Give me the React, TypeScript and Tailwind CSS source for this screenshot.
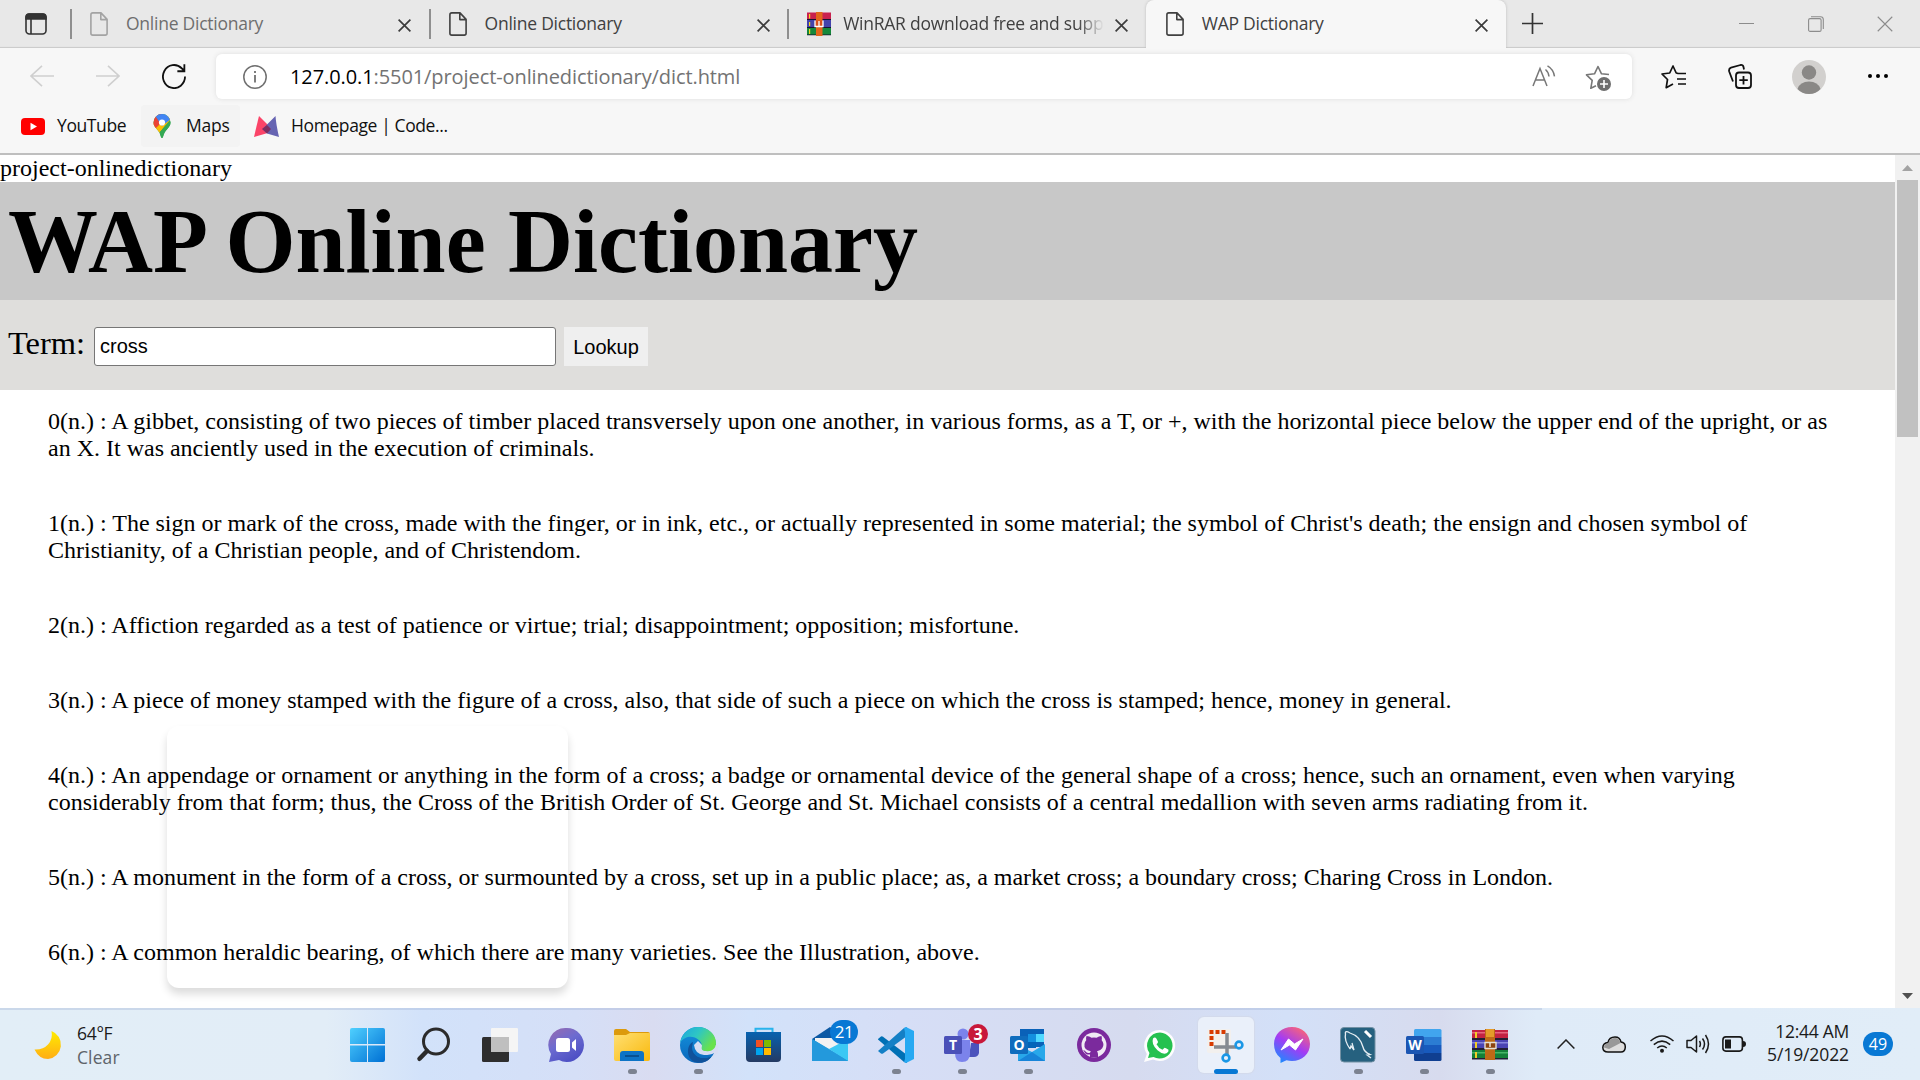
import React from "react";

const UI = "font-['Open_Sans','Noto_Sans',sans-serif]";

function DocIcon({ color }: { color: string }) {
  return (
    <svg width="18" height="24" viewBox="0 0 18 24" fill="none" stroke={color} strokeWidth="1.6" strokeLinejoin="round" className="shrink-0">
      <path d="M2.8 .9H11L17.1 7.4V21.2Q17.1 23.1 15.2 23.1H2.8Q.9 23.1 .9 21.2V2.8Q.9 .9 2.8 .9ZM10.8 1V7.6H17" />
    </svg>
  );
}

function CloseIcon({ size = 13, color = "#3c3c3c", w = 1.7 }: { size?: number; color?: string; w?: number }) {
  return (
    <svg width={size} height={size} viewBox="0 0 13 13" stroke={color} strokeWidth={w} className="shrink-0">
      <path d="M.6 .6 12.4 12.4M12.4 .6 .6 12.4" />
    </svg>
  );
}

function RarFavicon() {
  return (
    <svg width="24" height="24" viewBox="0 0 24 24" className="shrink-0">
      <path d="M0 .5h24v7.500H0z" fill="#c9214e" />
      <path d="M0 8h24v8H0z" fill="#4443ac" />
      <path d="M0 16h24v7H0z" fill="#16883b" />
      <path d="M0 7h24v1H0zM0 15h24v1H0zM0 22.4h24v.8H0z" fill="#151530" />
      <path d="M9 0h6.500v24H9z" fill="#e2661b" />
      <path d="M2 2h1.200v4.500H2zM2 10h1.200v4H2zM2 17h1.200v5H2z" fill="#f4d722" />
      <path d="M8 8.500v6h8v-6" fill="#d84f1f" stroke="#fff" strokeWidth="1.300" />
      <path d="M12 9v5" stroke="#fff" strokeWidth="1.300" />
    </svg>
  );
}

function Tab({ title, icon, muted, clip }: { title: string; icon: React.ReactNode; muted?: boolean; clip?: boolean }) {
  return (
    <div className="flex h-12 w-[358.6px] shrink-0 items-center">
      <div className="h-[30px] w-0.5 shrink-0 bg-[#8f8f8f]" />
      <div className="ml-[18px] flex w-6 shrink-0 items-center">{icon}</div>
      <div
        className={`ml-3 -mt-px w-[261px] shrink-0 whitespace-nowrap text-[17.5px] tracking-[-0.25px] ${muted ? "text-[#6e6e6e]" : "text-[#404040]"} ${clip ? "[mask-image:linear-gradient(to_right,black_90%,transparent_100%)]" : ""}`}
      >
        {title}
      </div>
      <div className="ml-[11px] mt-0.5">
        <CloseIcon />
      </div>
    </div>
  );
}

function TabStrip() {
  return (
    <div className="flex h-12 items-center bg-[#e8e8e8] shadow-[inset_0_-2px_1px_-1px_#c9c9c9]">
      <svg className="ml-[25px] shrink-0" width="22" height="22" viewBox="0 0 22 22" fill="none" stroke="#333" strokeWidth="1.600">
        <rect x="1" y="1" width="20" height="20" rx="3.500" />
        <path d="M1 6V4a3 3 0 013-3h14a3 3 0 013 3v2z" fill="#333" />
        <path d="M6 6v15" />
      </svg>
      <div className="ml-[23px] flex">
        <Tab title="Online Dictionary" icon={<DocIcon color="#a3a3a3" />} muted />
        <Tab title="Online Dictionary" icon={<DocIcon color="#404040" />} />
        <Tab title="WinRAR download free and supp" icon={<RarFavicon />} clip />
      </div>
      <div className="flex h-12 w-[360px] shrink-0 items-center rounded-t-lg bg-[#f7f7f7] pl-5 shadow-[0_0_3px_#bbb] [clip-path:inset(-3px_-3px_0_-3px)]">
        <DocIcon color="#404040" />
        <div className="ml-[18px] -mt-px w-[261px] text-[17.500px] tracking-[-0.250px] text-[#404040]">WAP Dictionary</div>
        <div className="ml-[12px] mt-0.5">
          <CloseIcon />
        </div>
      </div>
      <svg className="-mt-0.5 ml-4 shrink-0" width="21" height="21" viewBox="0 0 21 21" stroke="#333" strokeWidth="1.700">
        <path d="M10.500 0v21M0 10.500h21" />
      </svg>
      <div className="-mt-px ml-auto mr-[27px] flex items-center gap-[53px]">
        <div className="mr-px h-px w-[15px] bg-[#8c8c8c]" />
        <svg width="16" height="16" viewBox="0 0 16 16" fill="none" stroke="#8c8c8c" strokeWidth="1.100">
          <rect x=".6" y="2.600" width="12.500" height="12.800" rx="1.500" />
          <path d="M3 .7h9.500q2.800 0 2.800 2.800V13" />
        </svg>
        <CloseIcon size={16} color="#8c8c8c" w={0.9} />
      </div>
    </div>
  );
}

function AddressRow() {
  return (
    <div className="flex h-[57px] items-center">
      <svg className="ml-[30px] -mt-0.5 shrink-0" width="24" height="22" viewBox="0 0 24 22" fill="none" stroke="#cfcfcf" strokeWidth="1.600">
        <path d="M24 11H1M12 .8 1 11 12 21.200" />
      </svg>
      <svg className="ml-[42px] -mt-0.5 shrink-0" width="24" height="22" viewBox="0 0 24 22" fill="none" stroke="#cfcfcf" strokeWidth="1.600">
        <path d="M0 11H23M12 .8 23 11 12 21.200" />
      </svg>
      <svg className="ml-[42px] shrink-0" width="24" height="25" viewBox="0 0 25 25" preserveAspectRatio="none" fill="none" stroke="#111" strokeWidth="1.900">
        <path d="M24 12.500A11.500 11.500 0 1 1 20.500 4.300L23.200 6.800M23.300 .3V7.200H16" />
      </svg>
      <div className="ml-[30px] flex h-[45px] w-[1416px] shrink-0 items-center rounded-md bg-white shadow-[0_0_5px_#dedede]">
        <svg className="ml-[27px] shrink-0" width="24" height="24" viewBox="0 0 24 24" fill="none" stroke="#707070" strokeWidth="1.500">
          <circle cx="12" cy="12" r="11.200" />
          <path d="M12 10v7.500M12 6v2" strokeWidth="1.800" />
        </svg>
        <div className="ml-[23px] whitespace-nowrap text-[20px] tracking-[-0.090px] text-[#737373]">
          <span className="text-black">127.0.0.1</span>:5501/project-onlinedictionary/dict.html
        </div>
        <svg className="-mt-0.5 ml-auto shrink-0" width="24" height="22" viewBox="0 0 24 22" fill="none" stroke="#777" strokeWidth="1.500">
          <path d="M1 21 8 3.500 15 21M3.500 15h9M13.500 4.500q3 2.500 3.500 7M15.500 .8q6 3.500 7 10.500" />
        </svg>
        <svg className="ml-[29px] mr-[20px] mt-0.5 shrink-0" width="27" height="26" viewBox="0 0 27 26" fill="none" stroke="#777" strokeWidth="1.600" strokeLinejoin="round">
          <path d="M24 9.500 16.500 8.800 13 1.500 9.500 8.800 1.500 9.800 7.200 15.300 5.800 23.300 11 20.800" />
          <circle cx="19" cy="19" r="7" fill="#6e6e6e" stroke="none" />
          <path d="M19 15v8M15 19h8" stroke="#fff" />
        </svg>
      </div>
      <svg className="ml-[29px] shrink-0" width="25" height="24" viewBox="0 0 25 24" fill="none" stroke="#111" strokeWidth="1.700" strokeLinejoin="round">
        <path d="M17 8.300 15.200 8 12 1 8.700 8 1 9 6.500 14.500 5.200 22.700 12 19M16.500 8.500H25M16 14h9M17 19h8" />
      </svg>
      <svg className="ml-[42px] shrink-0" width="24" height="25" viewBox="0 0 24 25" fill="none" stroke="#111" strokeWidth="1.800" strokeLinejoin="round">
        <rect x="8" y="8.500" width="15" height="15.500" rx="3" />
        <path d="M15.500 12v8.500M11.300 16.200h8.500M5 17.500 1.200 7.500Q.5 4.500 3 3.700L12.500 1Q15 .7 15.500 3L16 5.500" />
      </svg>
      <svg className="ml-[40px] shrink-0" width="34" height="34" viewBox="0 0 34 34">
        <circle cx="17" cy="17" r="17" fill="#d2d0ce" />
        <circle cx="17" cy="12.500" r="7.200" fill="#8a8886" />
        <path d="M5.500 29Q8 21.500 17 21.500T28.500 29Q24 34 17 34T5.500 29Z" fill="#8a8886" />
      </svg>
      <div className="-mt-0.5 ml-[42px] flex gap-1">
        <div className="size-1 rounded-full bg-black" />
        <div className="size-1 rounded-full bg-black" />
        <div className="size-1 rounded-full bg-black" />
      </div>
    </div>
  );
}

function Bookmarks() {
  return (
    <div className="flex h-[42px] items-center text-[17.500px] tracking-[-0.400px] text-[#111]">
      <div className="flex w-[141px] items-center pl-[21px]">
        <svg width="24" height="17" viewBox="0 0 24 17">
          <rect width="24" height="17" rx="4" fill="#f00" />
          <path d="M9.500 4.800v7.400L16 8.500z" fill="#fff" />
        </svg>
        <span className="-mt-0.5 ml-3">YouTube</span>
      </div>
      <div className="flex h-full w-[99px] items-center rounded bg-[#f3f3f3] pl-3">
        <svg width="18" height="24" viewBox="0 0 18 24">
          <defs>
            <clipPath id="pin">
              <path d="M9 0a8.500 8.500 0 018.500 8.500C17.500 14 11.500 15.500 10 23q-1 2-2 0C6.500 15.500.5 14 .5 8.500A8.500 8.500 0 019 0z" />
            </clipPath>
          </defs>
          <g clipPath="url(#pin)">
            <path d="M0 0h18v24H0z" fill="#34a853" />
            <path d="M0 9 9 8l6-8h3v6L6 19H0z" fill="#fbbc04" />
            <path d="M0 0h9l-1 9-5 5H0z" fill="#ea4335" />
            <path d="M3 3V0h15v5L9 12z" fill="#4285f4" />
            <path d="M11 13 18 5v19H7v-6z" fill="#34a853" />
          </g>
          <circle cx="9" cy="8.500" r="3.100" fill="#fff" />
        </svg>
        <span className="-mt-0.5 ml-[15px] tracking-[-0.200px]">Maps</span>
      </div>
      <svg className="ml-[14px]" width="25" height="21" viewBox="0 0 25 21">
        <path d="M5 0 18 13 12 17.500 0 21Q3 8 5 0z" fill="#fb4468" />
        <path d="M21.500 0 8.500 13l4.500 4.500L25 21Q22 8 21.500 0z" fill="#6664b2" />
        <path d="M13 9 17 13l-4 4.500-5-4.500z" fill="#7d2d61" />
      </svg>
      <span className="-mt-0.5 ml-3 whitespace-nowrap">Homepage | Code...</span>
    </div>
  );
}

const entries: string[][] = [
  [
    "0(n.) : A gibbet, consisting of two pieces of timber placed transversely upon one another, in various forms, as a T, or +, with the horizontal piece below the upper end of the upright, or as",
    "an X. It was anciently used in the execution of criminals.",
  ],
  [
    "1(n.) : The sign or mark of the cross, made with the finger, or in ink, etc., or actually represented in some material; the symbol of Christ's death; the ensign and chosen symbol of",
    "Christianity, of a Christian people, and of Christendom.",
  ],
  ["2(n.) : Affiction regarded as a test of patience or virtue; trial; disappointment; opposition; misfortune."],
  ["3(n.) : A piece of money stamped with the figure of a cross, also, that side of such a piece on which the cross is stamped; hence, money in general."],
  [
    "4(n.) : An appendage or ornament or anything in the form of a cross; a badge or ornamental device of the general shape of a cross; hence, such an ornament, even when varying",
    "considerably from that form; thus, the Cross of the British Order of St. George and St. Michael consists of a central medallion with seven arms radiating from it.",
  ],
  ["5(n.) : A monument in the form of a cross, or surmounted by a cross, set up in a public place; as, a market cross; a boundary cross; Charing Cross in London."],
  ["6(n.) : A common heraldic bearing, of which there are many varieties. See the Illustration, above."],
];

function Page() {
  return (
    <div className="relative flex h-[853px] bg-white font-['Liberation_Serif',serif] text-[24px] leading-[27px] text-black">
      <div className="flex w-[1895px] flex-col overflow-hidden">
        <div className="h-[27px]">project-onlinedictionary</div>
        <h1 className="h-[118px] bg-[#c8c8c8] pl-2 pt-[9px] text-[90px] font-bold leading-[102px]">WAP Online Dictionary</h1>
        <div className="flex h-[90px] items-start bg-[#dfdedc] pl-2 pt-[26px]">
          <label className="-mt-px w-[86px] text-[32.500px] leading-[36px]">Term:</label>
          <input
            readOnly
            value="cross"
            className="mt-px h-[39px] w-[462px] rounded-[3px] border-[1.500px] border-[#767676] bg-white px-[5px] font-['Liberation_Sans',sans-serif] text-[20px] outline-none"
          />
          <button className="ml-2 mt-px h-[39px] w-[84px] bg-[#efefef] pt-px font-['Liberation_Sans',sans-serif] text-[20px]">Lookup</button>
        </div>
        <div className="flex flex-col gap-12 pl-12 pt-[18px]">
          {entries.map((lines) => (
            <div key={lines[0]} className="whitespace-nowrap">
              {lines.map((line) => (
                <div key={line}>{line}</div>
              ))}
            </div>
          ))}
        </div>
      </div>
      <div className="flex w-[25px] flex-col items-center justify-between bg-[#f1f1f1]">
        <div className="flex flex-col items-center">
          <svg width="25" height="25" viewBox="0 0 25 25"><path d="M7 16h11l-5.500-6z" fill="#a3a3a3" /></svg>
          <div className="h-[257px] w-[21px] bg-[#c1c1c1]" />
        </div>
        <svg width="25" height="25" viewBox="0 0 25 25"><path d="M7 10h11l-5.500 6z" fill="#505050" /></svg>
      </div>
      <div className="absolute left-[167px] top-[571px] h-[262px] w-[401px] rounded-xl shadow-[0_6px_9px_rgba(0,0,0,0.14)]" />
    </div>
  );
}

const art: Record<string, React.ReactNode> = {
  start: (
    <>
      <defs>
        <linearGradient id="win" x1="0" y1="0" x2="1" y2="1">
          <stop stopColor="#4fd0ff" />
          <stop offset="1" stopColor="#0070d4" />
        </linearGradient>
      </defs>
      <path d="M2 1H17V17H0V3Q0 1 2 1ZM18 1H33Q35 1 35 3V17H18ZM0 18.500H17V35H2Q0 35 0 33ZM18 18.500H35V33Q35 35 33 35H18Z" fill="url(#win)" />
    </>
  ),
  search: (
    <g fill="none" stroke="#2b2b2b">
      <circle cx="20" cy="14.500" r="12.500" strokeWidth="3" />
      <path d="M11 24 3.500 31.800" strokeWidth="4.500" strokeLinecap="round" />
    </g>
  ),
  taskview: (
    <>
      <rect x="0" y="10" width="27" height="25" rx="1.500" fill="#2e2e2e" />
      <rect x="9" y="1" width="27" height="24" rx="1" fill="#f5f5f5" />
      <path d="M9 10h18v15H9z" fill="#bfbfbf" />
    </>
  ),
  chat: (
    <>
      <defs>
        <linearGradient id="chat" x1="0" y1="0" x2=".6" y2="1">
          <stop stopColor="#9a6bae" />
          <stop offset=".5" stopColor="#6c6bd0" />
          <stop offset="1" stopColor="#4d50c4" />
        </linearGradient>
      </defs>
      <path d="M18 1A17 17 0 1 1 11 33L1 35 3 27A17 17 0 0 1 18 1Z" fill="url(#chat)" />
      <rect x="8" y="11" width="14" height="14" rx="2.500" fill="#fff" />
      <path d="M24 15.500 28 12v12l-4-3.500z" fill="#fff" />
    </>
  ),
  explorer: (
    <>
      <defs>
        <linearGradient id="fold" x1="0" y1="0" x2="1" y2="1">
          <stop stopColor="#ffdf72" />
          <stop offset="1" stopColor="#f9b90d" />
        </linearGradient>
      </defs>
      <path d="M0 4q0-2 2-2h10l4 3h18q2 0 2 2v6H0z" fill="#dc9a0c" />
      <path d="M0 8h12l4-2h20v26q0 2-2 2H2q-2 0-2-2z" fill="url(#fold)" />
      <path d="M6 34V27q0-3 3-3h18q3 0 3 3v7z" fill="#0d73c6" />
      <path d="M11 29h14" stroke="#064580" strokeWidth="1.500" />
    </>
  ),
  edge: (
    <>
      <defs>
        <linearGradient id="edg" x1="0" y1="0" x2="1" y2=".5">
          <stop stopColor="#1ba5e0" />
          <stop offset=".5" stopColor="#2ec6c4" />
          <stop offset="1" stopColor="#69e24c" />
        </linearGradient>
        <linearGradient id="edb" x1="0" y1="0" x2="0" y2="1">
          <stop stopColor="#1595df" />
          <stop offset="1" stopColor="#0a66bb" />
        </linearGradient>
      </defs>
      <circle cx="18" cy="18" r="18" fill="url(#edb)" />
      <path d="M13 15C9 25 17 35 31 30C27 36 20 36.500 15 35C5 31 7 17 13 15Z" fill="#10529b" />
      <path d="M14 18Q15 27 24 28 31 28 34 26L33 30 38 26V18H22L18 14Z" fill="#d6ddf3" />
      <path d="M13 15C8 25 17 35 31 30Q22 37 15 31 10 25 13 15Z" fill="#10529b" />
      <path d="M0 16C2 6 9 0 18 0C28 0 36 7 36 16C36 22 31 25 26 24C22 24 21 22 22 19C22 12 8 4 0 16Z" fill="url(#edg)" />
    </>
  ),
  store: (
    <>
      <defs>
        <linearGradient id="sto" x1="0" y1="0" x2="0" y2="1">
          <stop stopColor="#0762b0" />
          <stop offset="1" stopColor="#243a63" />
        </linearGradient>
      </defs>
      <path d="M9.500 7V1.800h17V7" fill="none" stroke="#28b3ec" strokeWidth="2" />
      <path d="M0 5h35v26q0 4-4 4H4q-4 0-4-4z" fill="url(#sto)" />
      <path d="M10 13h7v7h-7z" fill="#f25022" />
      <path d="M18 13h7v7h-7z" fill="#7fba00" />
      <path d="M10 21h7v7h-7z" fill="#00a4ef" />
      <path d="M18 21h7v7h-7z" fill="#ffb900" />
    </>
  ),
  mail: (
    <>
      <path d="M0 12 18 0 36 12v10H0z" fill="#0c59a4" />
      <path d="M3 11h30v6L18 24 3 14z" fill="#f2f2f2" />
      <path d="M0 12 36 33v1H0z" fill="#27a5e3" />
      <path d="M36 12 17 22 36 34z" fill="#3bc8f4" />
      <path d="M0 34 0 12 36 34z" fill="#2399dc" />
    </>
  ),
  code: (
    <>
      <path d="M0 12 3 9.500Q4 9 5 9.700L29 28V36L26 35 0 12.500z" fill="#0070b5" />
      <path d="M0 24 26 1 29 .2V9L5 26.500Q4 27 3 26.500L0 24z" fill="#1480c6" />
      <path d="M26 1 28 0 36 4V32L28 36 26 35 27 32V5z" fill="#27a9f2" />
    </>
  ),
  teams: (
    <>
      <path d="M27 16h8v10q-1 4-5 4h-5z" fill="#4b53bc" />
      <circle cx="19" cy="7" r="5.500" fill="#7b83eb" />
      <path d="M11 13h15v13q0 9-8 9-7 0-7-9z" fill="#7b83eb" />
      <rect x="0" y="9" width="18" height="18" rx="1.500" fill="#4a50b8" />
      <text x="9" y="23" textAnchor="middle" fill="#fff" fontSize="14" fontWeight="700" fontFamily="Open Sans">T</text>
    </>
  ),
  outlook: (
    <>
      <path d="M10 2h24v18H10z" fill="#0a61b8" />
      <path d="M18 7h8v8h-8z" fill="#1490df" />
      <path d="M26 7h8v8h-8z" fill="#50d9ff" />
      <path d="M18 15h8v6h-8z" fill="#0364b8" />
      <path d="M8 18 22 25 35 17V34H8z" fill="#28a8ea" />
      <path d="M8 34 22 25 35 34z" fill="#1784d9" />
      <rect x="0" y="9" width="18" height="18" rx="1.500" fill="#0f6cbd" />
      <text x="9" y="23" textAnchor="middle" fill="#fff" fontSize="14" fontWeight="700" fontFamily="Open Sans">O</text>
    </>
  ),
  github: (
    <>
      <circle cx="18" cy="18" r="17" fill="#7b2a9d" />
      <circle cx="18" cy="18" r="12.500" fill="#f0eaf4" />
      <path d="M10.500 9q3 0 5 1.700 2.500-.5 5 0Q23 9 25.500 9q.8 2.300.2 4.200 3.300 4 .5 8-1.700 2.500-5.200 3 1 1.500 1 3V30.500h-8V27.500Q9.500 28 8.500 25q-.8-1-1.300-1.700Q9 23 10 25q1.500 1.500 4 .7l.8-1.500Q7.500 23 8.500 17q.2-2.200 1.700-3.800-.5-2 .3-4.200z" fill="#7b2a9d" />
    </>
  ),
  whatsapp: (
    <>
      <path d="M18 3A15.500 15.500 0 1 1 11 32.500L2 35 4.800 27A15.500 15.500 0 0 1 18 3Z" fill="#fdfdfd" />
      <path d="M18 5.500A13 13 0 1 1 11.500 30L6 31 7.500 26A13 13 0 0 1 18 5.500Z" fill="#25c14f" />
      <path d="M11 11.500q2-2 3.500.3l1.500 3q.2 1-1.500 2.500 2 4 6 5.500l2-2q1 0 4 2 .5 2-2 3.500-4 1.500-9-3-6.500-6-4.500-11.800z" fill="#fff" />
    </>
  ),
  snip: (
    <>
      <rect x="-1" y="2" width="24" height="24" rx="2" fill="#f2f0ee" />
      <path d="M3.500 19V5H19" fill="none" stroke="#d83b01" strokeWidth="4" strokeDasharray="4 2" />
      <path d="M19 6v22M6 20h22" fill="none" stroke="#858a91" strokeWidth="3.500" />
      <g fill="none" stroke="#1a97e6" strokeWidth="2.600">
        <circle cx="31" cy="18" r="3.400" />
        <circle cx="18" cy="31" r="3.400" />
      </g>
    </>
  ),
  messenger: (
    <>
      <defs>
        <linearGradient id="msg" x1=".2" y1="1" x2=".8" y2="0">
          <stop stopColor="#1a8bff" />
          <stop offset=".5" stopColor="#a23cf5" />
          <stop offset="1" stopColor="#ff6670" />
        </linearGradient>
      </defs>
      <path d="M18 0C28 0 36 7 36 17S28 34 18 34Q15 34 12.500 33.300L6.500 36V31Q0 26 0 17C0 7 8 0 18 0Z" fill="url(#msg)" />
      <path d="M7 23 14.500 12 20.500 17 29 12 21.500 23 15.500 18z" fill="#fff" stroke="#fff" strokeLinejoin="round" />
    </>
  ),
  mysql: (
    <>
      <rect x=".5" y=".5" width="34.500" height="34.500" rx="3.500" fill="#26617f" stroke="#7391a4" />
      <path d="M10 22Q4 13 5.500 7 4.500 3 10 6 20 9 23 20 24 25 30 27.500L27 28 31 31M10 22l1-3 3 4-2-7" fill="none" stroke="#e6eef3" strokeWidth="1.300" />
      <path d="m25 4 3 3 3 3" stroke="#fff" strokeWidth="3" />
    </>
  ),
  word: (
    <>
      <path d="M8 10V3.500Q8 2 9.500 2H34q1.500 0 1.500 1.500V10z" fill="#41a5ee" />
      <path d="M8 10h27.500v8H8z" fill="#2b7cd3" />
      <path d="M8 18h27.500v8H8z" fill="#185abd" />
      <path d="M8 26h27.500v6.500q0 1.500-1.500 1.500H9.500Q8 34 8 32.500z" fill="#103f91" />
      <rect x="0" y="9" width="18" height="18" rx="1.500" fill="#1b56b3" />
      <text x="9" y="23" textAnchor="middle" fill="#fff" fontSize="14" fontWeight="700" fontFamily="Open Sans">W</text>
    </>
  ),
  winrar: (
    <>
      <path d="M0 3h36v9H0z" fill="#c32243" />
      <path d="M0 13h36v9H0z" fill="#4a44b4" />
      <path d="M0 23h36v9H0z" fill="#138038" />
      <path d="M0 11h36v2H0zM0 21h36v2H0zM0 31h36v1.500H0z" fill="#221f35" />
      <path d="M0 5h36v1.500H0z" fill="#e66680" />
      <path d="M0 15h36v1.500H0z" fill="#8785dd" />
      <path d="M0 25h36v1.500H0z" fill="#45b566" />
      <path d="M3 5h2v6H3zM3 15h2v6H3zM3 25h2v6H3z" fill="#f3cd24" />
      <path d="M13 2h10v31H13z" fill="#bd6a17" />
      <path d="M14 2h8v8h-8z" fill="#e49b2a" />
      <path d="M13 15.500h11v6H13z" fill="#8d430f" stroke="#e6dfd2" strokeWidth="1.400" />
      <path d="M18 16v4" stroke="#f4eee4" strokeWidth="1.400" />
    </>
  ),
};

const apps: { id: string; running?: boolean; badge?: string }[] = [
  { id: "start" },
  { id: "search" },
  { id: "taskview" },
  { id: "chat" },
  { id: "explorer", running: true },
  { id: "edge", running: true },
  { id: "store" },
  { id: "mail", badge: "21" },
  { id: "code", running: true },
  { id: "teams", running: true, badge: "3" },
  { id: "outlook", running: true },
  { id: "github" },
  { id: "whatsapp" },
  { id: "snip" },
  { id: "messenger" },
  { id: "mysql", running: true },
  { id: "word", running: true },
  { id: "winrar", running: true },
];

function TaskIcon({ id, running, badge }: { id: string; running?: boolean; badge?: string }) {
  const active = id === "snip";
  return (
    <div className="relative flex h-[70px] w-[66px] shrink-0 items-center justify-center">
      <div className={`relative flex h-14 w-14 items-center justify-center rounded-md ${active ? "bg-[#eaf0fa] shadow-[0_0_1px_1px_#d3daeb]" : ""}`}>
        <svg width="36" height="36" viewBox="0 0 36 36" className="overflow-visible">{art[id]}</svg>
        {running && <div className="absolute -bottom-px h-[5px] w-[9px] rounded-full bg-[#7c8290]" />}
        {active && <div className="absolute -bottom-px h-[5px] w-6 rounded-full bg-[#0878d4]" />}
      </div>
      {id === "mail" && (
        <div className="absolute left-[33px] top-[10px] flex h-6 w-7 items-center justify-center rounded-full bg-[#0878d4] text-[17px] tracking-tight text-white">{badge}</div>
      )}
      {id === "teams" && (
        <div className="absolute left-[39px] top-[14px] flex size-5 items-center justify-center rounded-full bg-[#c8183a] text-[16px] font-bold text-white">{badge}</div>
      )}
    </div>
  );
}

function Taskbar() {
  return (
    <div className="flex h-[72px] flex-col bg-[linear-gradient(90deg,#e2eef7_0%,#e2edf7_17%,#d2e2fa_22%,#d5dff7_30%,#d9dcf1_34%,#d2e2fa_39%,#d6def6_47%,#d6dbef_59%,#d3e0f8_67%,#d7dbee_75%,#dfebf8_80%,#e1edf8_100%)]">
      <div className="h-0.5 w-[1542px] bg-[#9eb0d0]/35" />
      <div className="flex h-[70px] items-center">
        <svg className="ml-[34px] shrink-0" width="30" height="30" viewBox="0 0 30 30">
          <defs>
            <linearGradient id="moon" x1="0" y1="0" x2="0" y2="1">
              <stop stopColor="#ffec00" />
              <stop offset="1" stopColor="#ffad16" />
            </linearGradient>
          </defs>
          <path d="M17.500 1A14.500 14.500 0 0 1 14 29Q5 29 .5 19.500Q9 20 14 14.500T17.500 1Z" fill="url(#moon)" />
        </svg>
        <div className="ml-[13px] w-[258px] text-[17.500px] leading-6 tracking-[-0.300px]">
          <div className="text-[#1b1b1b]">64°F</div>
          <div className="tracking-[0.100px] text-[#5e646a]">Clear</div>
        </div>
        <div className="flex">
          {apps.map((a) => (
            <TaskIcon key={a.id} {...a} />
          ))}
        </div>
        <svg className="-mt-0.5 ml-[34px] shrink-0" width="18" height="10" viewBox="0 0 18 10" fill="none" stroke="#222" strokeWidth="1.500">
          <path d="M.6 9.500 9 1l8.400 8.500" />
        </svg>
        <svg className="-mt-0.5 ml-[27px] shrink-0" width="24" height="17" viewBox="0 0 24 17">
          <path d="M6 16Q1 16 .8 11.500 1 7 6 6.500 7 1 13 1q5 0 6 5 4.300.5 4.300 5Q23 16 19 16z" fill="#ddd" stroke="#111" strokeWidth="1.500" />
          <path d="M2 11.500Q2 7.500 6 7.500 8 2 13 2q4 0 5.500 5L7 13z" fill="#989898" />
        </svg>
        <svg className="-mt-0.5 ml-[24px] shrink-0" width="24" height="18" viewBox="0 0 24 18" fill="none" stroke="#1a1a1a" strokeWidth="1.500">
          <path d="M.5 6Q12-4 23.500 6M3.800 9.600q8.200-7 16.400 0M7.200 13q4.800-4 9.600 0" />
          <circle cx="12" cy="15.800" r="2" fill="#1a1a1a" stroke="none" />
        </svg>
        <svg className="-mt-0.5 ml-[12px] shrink-0" width="24" height="20" viewBox="0 0 24 20" fill="none" stroke="#1a1a1a" strokeWidth="1.500" strokeLinejoin="round">
          <path d="M1 6.500h4L10.500 2v16L5 13.500H1zM13.500 7q1.800 3 0 6M16.500 4.500q4 5.500 0 11M19.500 1q6 9 0 18" />
        </svg>
        <svg className="-mt-0.5 ml-[12px] shrink-0" width="24" height="16" viewBox="0 0 24 16">
          <rect x=".9" y=".9" width="19.500" height="14.200" rx="3" fill="none" stroke="#1a1a1a" strokeWidth="1.600" />
          <path d="M3 3.500h6v9H3zM21 5q3 0 3 3t-3 3z" fill="#1a1a1a" />
        </svg>
        <div className="-mt-1 ml-auto text-right text-[17.500px] leading-[23px] tracking-[-0.280px] text-[#1b1b1b]">
          <div>12:44 AM</div>
          <div className="tracking-[-0.100px]">5/19/2022</div>
        </div>
        <div className="-mt-0.5 ml-[14px] mr-[27px] flex h-6 w-[30px] items-center justify-center rounded-full bg-[#0878d4] text-[16px] text-white">49</div>
      </div>
    </div>
  );
}

export default function App() {
  return (
    <div className={`flex h-[1080px] w-[1920px] flex-col overflow-hidden bg-[#f7f7f7] ${UI}`}>
      <TabStrip />
      <AddressRow />
      <Bookmarks />
      <div className="mt-[6px] h-0.5 bg-[#bfbfbf]" />
      <Page />
      <Taskbar />
    </div>
  );
}
